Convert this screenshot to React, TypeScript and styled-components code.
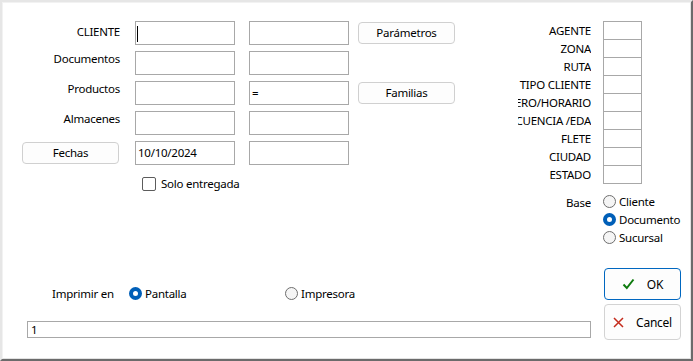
import React, { FC } from "react";
import styled, { createGlobalStyle, css } from "styled-components";

const GlobalStyle = createGlobalStyle`
  html, body {
    margin: 0;
    padding: 0;
    background: #ffffff;
  }
  body {
    font-family: "Noto Sans", "Liberation Sans", sans-serif;
    font-size: 11.5px;
    letter-spacing: -0.25px;
    color: #000000;
  }
`;

const Frame = styled.div`
  width: 693px;
  height: 361px;
  box-sizing: border-box;
  border-top: 2px solid #e6e6e6;
  border-left: 2px solid #e6e6e6;
  border-right: 2px solid #6b6b6b;
  border-bottom: 2px solid #6b6b6b;
`;

const Inner = styled.div`
  height: 100%;
  box-sizing: border-box;
  border-top: 1px solid #f2f2f2;
  border-left: 1px solid #f2f2f2;
  border-right: 1px solid #e2e2e2;
  border-bottom: 1px solid #e2e2e2;
  background: #ffffff;
  display: flex;
  flex-direction: column;
  padding-bottom: 18px;
`;

const TopSection = styled.div`
  display: flex;
  align-items: flex-start;
  padding: 18px 0 0 19px;
`;

const FormArea = styled.div`
  width: 433px;
  display: flex;
  flex-direction: column;
`;

const FormGrid = styled.div`
  display: grid;
  grid-template-columns: 113px 114px 109px 97px;
  grid-auto-rows: 24px;
  row-gap: 6px;
`;

const FieldLabel = styled.div<{ $top?: number }>`
  align-self: start;
  line-height: 16px;
  text-align: right;
  padding-right: 15px;
  white-space: nowrap;
  padding-top: ${({ $top }) => $top ?? 0}px;
`;

const TextBox = styled.div<{ $width?: number }>`
  position: relative;
  width: ${({ $width }) => $width ?? 100}px;
  height: 24px;
  box-sizing: border-box;
  border: 1px solid #a8a8a8;
  background: #ffffff;
  padding: 0 2px;
  line-height: 22px;
  white-space: nowrap;
  overflow: hidden;
`;

const Caret = styled.span`
  position: absolute;
  left: 1px;
  top: 4px;
  width: 1px;
  height: 16px;
  background: #000000;
`;

const PushButton = styled.button`
  align-self: center;
  width: 97px;
  height: 22px;
  box-sizing: border-box;
  border: 1px solid #d0d0d0;
  border-radius: 4px;
  background: #fdfdfd;
  font-family: inherit;
  font-size: inherit;
  letter-spacing: inherit;
  color: #000000;
  padding: 0;
  line-height: 20px;
`;

const CheckRow = styled.label`
  display: flex;
  align-items: center;
  margin-top: 12px;
  padding-left: 120px;
`;

const CheckBox = styled.span`
  width: 14px;
  height: 14px;
  box-sizing: border-box;
  border: 1px solid #5c5c5c;
  border-radius: 2px;
  background: #ffffff;
  flex: none;
`;

const ClippedText = styled.span<{ $width: number }>`
  display: block;
  margin-left: 5px;
  width: ${({ $width }) => $width}px;
  height: 14px;
  line-height: 14px;
  white-space: nowrap;
  overflow: hidden;
`;

const SidePanel = styled.div`
  margin-left: 63px;
  display: flex;
  flex-direction: column;
`;

const AttrRow = styled.div`
  display: flex;
  align-items: center;
  & + & {
    margin-top: -1px;
  }
`;

const AttrLabel = styled.div`
  width: 73px;
  display: flex;
  justify-content: flex-end;
  overflow: hidden;
  white-space: nowrap;
  margin-right: 12px;
  line-height: 16px;
`;

const AttrBox = styled.div`
  width: 39px;
  height: 19px;
  box-sizing: border-box;
  border: 1px solid #a8a8a8;
  background: #ffffff;
`;

const BaseGroup = styled.div`
  display: flex;
  align-items: flex-start;
  margin-top: 8px;
`;

const BaseLabel = styled(AttrLabel)`
  padding-top: 3px;
`;

const RadioList = styled.div`
  display: flex;
  flex-direction: column;
`;

const RadioOption = styled.label<{ $width?: number }>`
  display: flex;
  align-items: center;
  height: 18px;
  white-space: nowrap;
  ${({ $width }) =>
    $width &&
    css`
      width: ${$width}px;
    `}
`;

const RadioDot = styled.span<{ $checked?: boolean }>`
  width: 13px;
  height: 13px;
  box-sizing: border-box;
  border-radius: 50%;
  flex: none;
  margin-right: 3px;
  ${({ $checked }) =>
    $checked
      ? css`
          border: 4px solid #005fb8;
          background: #ffffff;
        `
      : css`
          border: 1px solid #6e6e6e;
          background: #f5f5f5;
        `}
`;

const BottomSection = styled.div`
  margin-top: auto;
  display: flex;
  align-items: flex-end;
  padding-left: 24px;
`;

const BottomLeft = styled.div`
  display: flex;
  flex-direction: column;
  width: 564px;
  margin-bottom: 2px;
`;

const PrintRow = styled.div`
  display: flex;
  align-items: center;
  padding-left: 25px;
  height: 16px;
  margin-bottom: 20px;
`;

const PrintLabel = styled.span`
  width: 77px;
  white-space: nowrap;
`;

const StatusBox = styled.div`
  height: 17px;
  box-sizing: border-box;
  border: 1px solid #a8a8a8;
  padding: 0 3px;
  line-height: 15px;
`;

const BottomRight = styled.div`
  margin-left: 13px;
  display: flex;
  flex-direction: column;
  gap: 4px;
`;

const DialogButton = styled.button<{ $primary?: boolean; $height: number }>`
  width: 77px;
  height: ${({ $height }) => $height}px;
  box-sizing: border-box;
  border-radius: 4px;
  background: #fdfdfd;
  border: 1px solid ${({ $primary }) => ($primary ? "#0067c0" : "#d3d3d3")};
  font-family: inherit;
  font-size: 12px;
  letter-spacing: inherit;
  color: #000000;
  display: flex;
  align-items: center;
  justify-content: center;
  gap: 12px;
  padding: 0;
`;

const attributes = [
  "AGENTE",
  "ZONA",
  "RUTA",
  "TIPO CLIENTE",
  "NUMERO/HORARIO",
  "FRECUENCIA /EDA",
  "FLETE",
  "CIUDAD",
  "ESTADO",
];

const CheckIcon: FC = () => (
  <svg width="13" height="12" viewBox="0 0 13 12">
    <path d="M1.5 6.5 L4.8 10 L11.5 1.5" fill="none" stroke="#0f7b0f" strokeWidth="2" />
  </svg>
);

const CrossIcon: FC = () => (
  <svg width="11" height="11" viewBox="0 0 11 11">
    <path d="M1 1 L10 10 M10 1 L1 10" fill="none" stroke="#c42b1c" strokeWidth="1.5" />
  </svg>
);

export default function App() {
  return (
    <>
      <GlobalStyle />
      <Frame>
        <Inner>
          <TopSection>
            <FormArea>
              <FormGrid>
                <FieldLabel $top={3}>CLIENTE</FieldLabel>
                <TextBox>
                  <Caret />
                </TextBox>
                <TextBox />
                <PushButton>Parámetros</PushButton>

                <FieldLabel>Documentos</FieldLabel>
                <TextBox />
                <TextBox />
                <span />

                <FieldLabel>Productos</FieldLabel>
                <TextBox />
                <TextBox>=</TextBox>
                <PushButton>Familias</PushButton>

                <FieldLabel>Almacenes</FieldLabel>
                <TextBox />
                <TextBox />
                <span />

                <PushButton>Fechas</PushButton>
                <TextBox>10/10/2024</TextBox>
                <TextBox />
                <span />
              </FormGrid>
              <CheckRow>
                <CheckBox />
                <ClippedText $width={80}>Solo entregada</ClippedText>
              </CheckRow>
            </FormArea>

            <SidePanel>
              {attributes.map((name) => (
                <AttrRow key={name}>
                  <AttrLabel>
                    <span>{name}</span>
                  </AttrLabel>
                  <AttrBox />
                </AttrRow>
              ))}
              <BaseGroup>
                <BaseLabel>
                  <span>Base</span>
                </BaseLabel>
                <RadioList>
                  <RadioOption>
                    <RadioDot />
                    Cliente
                  </RadioOption>
                  <RadioOption>
                    <RadioDot $checked />
                    Documento
                  </RadioOption>
                  <RadioOption>
                    <RadioDot />
                    Sucursal
                  </RadioOption>
                </RadioList>
              </BaseGroup>
            </SidePanel>
          </TopSection>

          <BottomSection>
            <BottomLeft>
              <PrintRow>
                <PrintLabel>Imprimir en</PrintLabel>
                <RadioOption $width={156}>
                  <RadioDot $checked />
                  Pantalla
                </RadioOption>
                <RadioOption>
                  <RadioDot />
                  Impresora
                </RadioOption>
              </PrintRow>
              <StatusBox>1</StatusBox>
            </BottomLeft>
            <BottomRight>
              <DialogButton $primary $height={32}>
                <CheckIcon />
                OK
              </DialogButton>
              <DialogButton $height={36}>
                <CrossIcon />
                Cancel
              </DialogButton>
            </BottomRight>
          </BottomSection>
        </Inner>
      </Frame>
    </>
  );
}
